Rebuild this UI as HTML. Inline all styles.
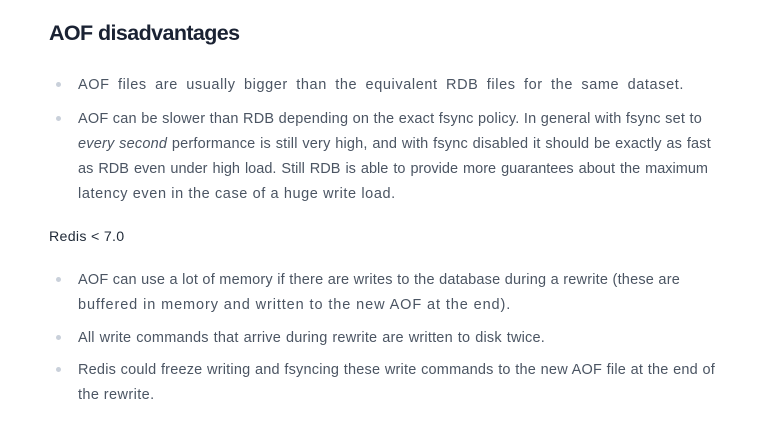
<!DOCTYPE html>
<html><head><meta charset="utf-8"><style>
body{margin:0;background:#fff;width:764px;height:422px;overflow:hidden;font-family:"Liberation Sans",sans-serif;}
h2{position:absolute;left:49px;top:21px;margin:0;font-size:21.5px;font-weight:bold;color:#1a2233;letter-spacing:-0.6px;}
.l{position:absolute;left:78px;font-size:14.5px;color:#4b5563;line-height:25px;letter-spacing:0.2px;}
.l div{text-align:justify;text-align-last:justify;height:25px;}
.l div.n{text-align:left;text-align-last:left;white-space:nowrap;}
.b{position:absolute;left:56px;width:5px;height:5px;border-radius:50%;background:#c9d0da;}
.h{position:absolute;left:49px;top:229px;font-size:14.2px;color:#1f2937;letter-spacing:0.3px;}
</style></head><body>
<h2>AOF disadvantages</h2>
<div class="b" style="top:82px"></div>
<div class="l" style="top:73px"><div style="width:606px;letter-spacing:0.6px">AOF files are usually bigger than the equivalent RDB files for the same dataset.</div></div>
<div class="b" style="top:116px"></div>
<div class="l" style="top:107px"><div style="width:624px">AOF can be slower than RDB depending on the exact fsync policy. In general with fsync set to</div><div style="width:633px"><i>every second</i> performance is still very high, and with fsync disabled it should be exactly as fast</div><div style="width:630px;letter-spacing:0px">as RDB even under high load. Still RDB is able to provide more guarantees about the maximum</div><div class="n" style="letter-spacing:0.6px">latency even in the case of a huge write load.</div></div>
<div class="h">Redis &lt; 7.0</div>
<div class="b" style="top:277px"></div>
<div class="l" style="top:268px"><div style="width:602px">AOF can use a lot of memory if there are writes to the database during a rewrite (these are</div><div class="n" style="letter-spacing:0.9px">buffered in memory and written to the new AOF at the end).</div></div>
<div class="b" style="top:335px"></div>
<div class="l" style="top:326px"><div style="width:467px">All write commands that arrive during rewrite are written to disk twice.</div></div>
<div class="b" style="top:367px"></div>
<div class="l" style="top:358px"><div style="width:637px">Redis could freeze writing and fsyncing these write commands to the new AOF file at the end of</div><div class="n" style="letter-spacing:0.4px">the rewrite.</div></div>
</body></html>
